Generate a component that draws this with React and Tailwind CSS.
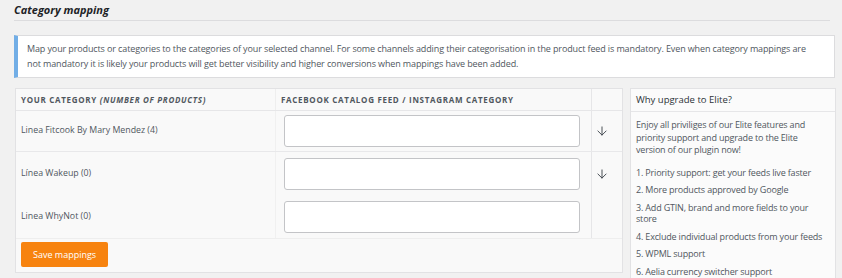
import { ArrowDown } from 'lucide-react';

const rows = [
    { name: 'Linea Fitcook By Mary Mendez (4)', arrow: true, h: 'h-[41px]' },
    { name: 'Línea Wakeup (0)', arrow: true, h: 'h-[43px]' },
    { name: 'Linea WhyNot (0)', arrow: false, h: 'h-[43px]' },
];

const perks = [
    '1. Priority support: get your feeds live faster',
    '2. More products approved by Google',
    '3. Add GTIN, brand and more fields to your store',
    '4. Exclude individual products from your feeds',
    '5. WPML support',
    '6. Aelia currency switcher support',
];

export default function App() {
    return (
        <div
            className="w-[842px] h-[278px] overflow-hidden bg-[#f1f1f1] pl-[14px] pr-[7px] text-[#3c434a]"
            style={{ fontFamily: '"Open Sans", "Noto Sans", sans-serif' }}
        >
            {/* Section title */}
            <div className="border-b border-[#dcdcde] mr-[5px] pt-[3px] pb-[3px]">
                <h2 className="text-[11px] font-bold italic leading-[14px] text-[#1d2327]">Category mapping</h2>
            </div>

            {/* Info notice */}
            <div className="mt-[14px] bg-white border border-[#dcdcde] border-l-4 border-l-[#72aee6] pl-[9px] pr-[16px] py-[6px] text-[9px] leading-[14.5px] tracking-[-0.12px] text-[#50575e]">
                Map your products or categories to the categories of your selected channel. For some channels adding their categorisation in the product feed is mandatory. Even when category mappings are not mandatory it is likely your products will get better visibility and higher conversions when mappings have been added.
            </div>

            <div className="flex items-start mt-[10px]">
                {/* Mapping table */}
                <div className="w-[608px] shrink-0 bg-[#f9f9f9] border border-[#e2e2e4] ml-px">
                    <div className="flex h-[22px] border-b border-[#e6e6e8] text-[8px] font-bold uppercase tracking-[0.7px] text-[#50575e]">
                        <div className="w-[259px] flex items-center pl-[5px]">
                            Your category&nbsp;<span className="italic">(number of products)</span>
                        </div>
                        <div className="w-[316px] flex items-center pl-[5px] border-l border-[#eeeeee]">Facebook catalog feed / Instagram category</div>
                        <div className="flex-1 border-l border-[#e6e6e8]" />
                    </div>
                    {rows.map((r, i) => (
                        <div key={r.name} className={`flex ${r.h} ${i === 0 ? 'border-b border-[#e8e8ea]' : ''}`}>
                            <div className="w-[259px] flex items-center pl-[5px] text-[8.8px] text-[#50575e]">{r.name}</div>
                            <div className="w-[316px] flex items-center pl-[8px] border-l border-[#f0f0f0]">
                                <div className="w-[296px] h-[32px] bg-white border border-[#c3c4c7] rounded-[3px]" />
                            </div>
                            <div className="flex-1 flex items-center justify-center border-l border-[#e6e6e8]">
                                {r.arrow && <ArrowDown size={14} strokeWidth={1.6} className="text-[#3c434a] -ml-[10px]" />}
                            </div>
                        </div>
                    ))}
                    <div className="h-[34px] border-t border-[#eeeeee] flex items-start pt-[3px] pl-[5px]">
                        <button className="h-[25px] px-[12px] bg-[#f7830f] text-white text-[9px] rounded-[2px]">Save mappings</button>
                    </div>
                </div>

                {/* Upgrade sidebar */}
                <div className="ml-[7px] w-[206px] shrink-0 bg-[#fbfbfb] border border-[#e2e2e4]">
                    <div className="h-[23px] flex items-center pl-[5px] border-b border-[#e6e6e8] text-[9.5px] text-[#2c3338]">Why upgrade to Elite?</div>
                    <div className="pl-[5px] pr-[10px] pt-[7px] text-[9px] leading-[12.5px] tracking-[-0.18px] text-[#50575e]">
                        <p>Enjoy all priviliges of our Elite features and priority support and upgrade to the Elite version of our plugin now!</p>
                        <ul className="mt-[7px] leading-[11.5px]">
                            {perks.map((p) => (
                                <li key={p} className="py-[3px]">{p}</li>
                            ))}
                        </ul>
                    </div>
                </div>
            </div>
        </div>
    );
}
